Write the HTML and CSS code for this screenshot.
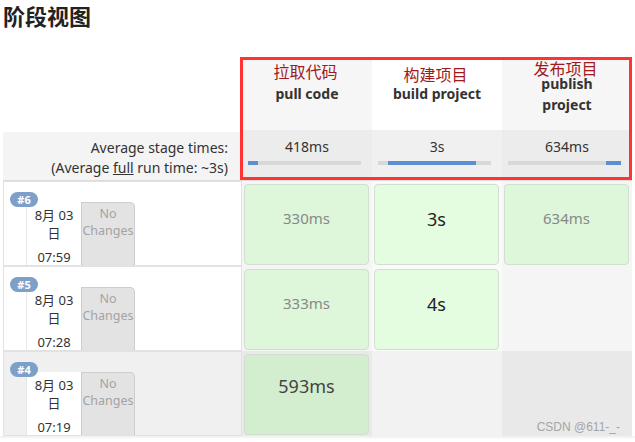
FILE: index.html
```html
<!DOCTYPE html>
<html lang="zh">
<head>
<meta charset="utf-8">
<title>阶段视图</title>
<link rel="stylesheet" href="styles.css">
</head>
<body>
<h2 class="title">阶段视图</h2>
<div class="stage-view">
  <div class="sv-grid">
    <div class="corner"></div>
    <div class="stage-head col-odd"><span class="note n1">拉取代码</span><span class="stage-name"><span>pull code</span></span></div>
    <div class="stage-head col-even"><span class="note n2">构建项目</span><span class="stage-name"><span>build project</span></span></div>
    <div class="stage-head col-odd"><span class="note n3">发布项目</span><span class="stage-name"><span>publish</span><span>project</span></span></div>

    <div class="avg-label">Average stage times:<br>(Average <u>full</u> run time: ~3s)</div>
    <div class="avg col-odd"><div class="avg-time">418ms</div><div class="bar"><span class="fill" style="left:0;width:10px"></span></div></div>
    <div class="avg col-even"><div class="avg-time">3s</div><div class="bar"><span class="fill" style="left:10px;width:88px"></span></div></div>
    <div class="avg col-odd"><div class="avg-time">634ms</div><div class="bar"><span class="fill" style="left:98px;width:15px"></span></div></div>

    <div class="build">
      <span class="badge">#6</span>
      <div class="cards">
        <div class="date"><div>8月 03<br>日</div><div class="time">07:59</div></div>
        <div class="changes">No<br>Changes</div>
      </div>
    </div>
    <div class="wrap col-odd"><div class="cell ok t-small">330ms</div></div>
    <div class="wrap col-even"><div class="cell ok bright t-big">3s</div></div>
    <div class="wrap col-odd"><div class="cell ok t-small">634ms</div></div>

    <div class="build">
      <span class="badge">#5</span>
      <div class="cards">
        <div class="date"><div>8月 03<br>日</div><div class="time">07:28</div></div>
        <div class="changes">No<br>Changes</div>
      </div>
    </div>
    <div class="wrap col-odd"><div class="cell ok t-small">333ms</div></div>
    <div class="wrap col-even"><div class="cell ok bright t-big">4s</div></div>
    <div class="wrap col-odd empty"></div>

    <div class="build hover">
      <span class="badge">#4</span>
      <div class="cards">
        <div class="date"><div>8月 03<br>日</div><div class="time">07:19</div></div>
        <div class="changes">No<br>Changes</div>
      </div>
    </div>
    <div class="wrap col-odd hover"><div class="cell ok deep t-large">593ms</div></div>
    <div class="wrap col-even hover empty"></div>
    <div class="wrap col-odd hover empty"></div>
  </div>
  <div class="highlight"></div>
</div>
<div class="watermark">CSDN @611-_-</div>
</body>
</html>
```

FILE: styles.css
```css
html, body {
  margin: 0;
  padding: 0;
  background: #fff;
}

body {
  font-family: "Noto Sans", "Noto Sans CJK SC", sans-serif;
  color: #333;
  position: relative;
  width: 635px;
  height: 442px;
  overflow: hidden;
}

.title {
  margin: 0 0 28px 3px;
  height: 30px;
  font-family: "Noto Sans CJK SC", sans-serif;
  font-size: 22px;
  line-height: 30px;
  font-weight: bold;
  color: #222;
}

.stage-view {
  position: relative;
}

.sv-grid {
  display: grid;
  grid-template-columns: 242px 130px 130px 130px;
  grid-template-rows: 72px 51px 85px 85px 85px;
  box-shadow: 0 2px 2px rgba(0, 0, 0, 0.06);
}

/* header */
.stage-head {
  position: relative;
  display: flex;
  align-items: center;
  justify-content: center;
  text-align: center;
}

.stage-head.col-odd { background: #f6f6f6; }
.stage-head.col-even { background: #fff; }

.stage-name {
  display: flex;
  flex-direction: column;
  align-items: center;
  gap: 7px;
  font-size: 14px;
  line-height: 14px;
  font-weight: bold;
  color: #333;
}

.note {
  position: absolute;
  left: -3px;
  right: 0;
  font-family: "Noto Sans CJK SC", sans-serif;
  font-size: 16px;
  line-height: 14px;
  font-weight: normal;
  color: #a0191b;
}

.n1 { top: 6px; }
.n2 { top: 9px; }
.n3 { top: 3px; }

/* averages */
.avg-label {
  margin: 2px 0 0 3px;
  padding: 6px 14px 0 0;
  background: #f4f4f4;
  border-bottom: 1px solid #dcdcdc;
  text-align: right;
  font-size: 14px;
  line-height: 20px;
  color: #333;
}

.avg {
  border-bottom: 1px solid #dcdcdc;
  text-align: center;
}

.avg.col-odd { background: #ececec; }
.avg.col-even { background: #f0f0f0; }

.avg-time {
  padding-top: 7px;
  font-size: 14px;
  line-height: 20px;
  color: #333;
}

.bar {
  position: relative;
  margin: 4px 0 0 6px;
  width: 113px;
  height: 4px;
  background: #d8d8d8;
}

.fill {
  position: absolute;
  top: 0;
  height: 4px;
  background: #5d8ed4;
}

/* build rows */
.build {
  position: relative;
  margin-left: 3px;
  padding: 20px 0 0 22px;
  border: 1px solid #e2e2e2;
  background: #fff;
  overflow: hidden;
}

.build.hover { background: #f0f0f0; }

.badge {
  position: absolute;
  left: 6px;
  top: 10px;
  width: 28px;
  height: 15px;
  border-radius: 8px;
  background: #7d9fc8;
  color: #fff;
  font-size: 11px;
  font-weight: bold;
  line-height: 15px;
  text-align: center;
  z-index: 1;
}

.cards {
  display: flex;
  height: 100%;
}

.date {
  width: 55px;
  box-sizing: border-box;
  padding-top: 4px;
  background: #fff;
  border-left: 1px solid #e8e8e8;
  text-align: center;
  font-size: 13px;
  line-height: 18px;
  color: #333;
}

.time { margin-top: 6px; }

.changes {
  width: 54px;
  box-sizing: border-box;
  padding-top: 2px;
  background: #e3e3e3;
  border: 1px solid #cdcdcd;
  border-bottom: none;
  border-top-right-radius: 5px;
  text-align: center;
  font-size: 12.5px;
  line-height: 17px;
  color: #a3a3a3;
}

/* stage cells */
.wrap {
  padding: 3px 3px 1px 2px;
}

.wrap.col-odd { background: #f5f5f5; }
.wrap.col-even { background: #fafafa; }
.wrap.hover.col-even { background: #f2f2f2; }
.wrap.hover.col-odd { background: #e9e9e9; }

.cell {
  height: 100%;
  box-sizing: border-box;
  border: 1px solid #d2dfd0;
  border-radius: 4px;
  text-align: center;
}

.cell.ok { background: #def6da; }
.cell.ok.bright { background: #e4fde1; }
.cell.ok.deep { background: #d3edcf; }

.t-small {
  padding-top: 23px;
  font-size: 15px;
  line-height: 20px;
  color: #888;
}

.t-big {
  padding-top: 22px;
  font-size: 18px;
  line-height: 24px;
  color: #222;
}

.t-large {
  padding-top: 19px;
  font-size: 18px;
  line-height: 24px;
  color: #444;
}

/* annotation overlays */
.highlight {
  position: absolute;
  left: 240px;
  top: -1px;
  width: 392px;
  height: 123px;
  box-sizing: border-box;
  border: 3px solid #f33;
  pointer-events: none;
}

.watermark {
  position: absolute;
  right: 15px;
  top: 420px;
  font-family: "Liberation Sans", sans-serif;
  font-size: 12px;
  line-height: 14px;
  color: #a5a5a5;
  white-space: nowrap;
}
```
